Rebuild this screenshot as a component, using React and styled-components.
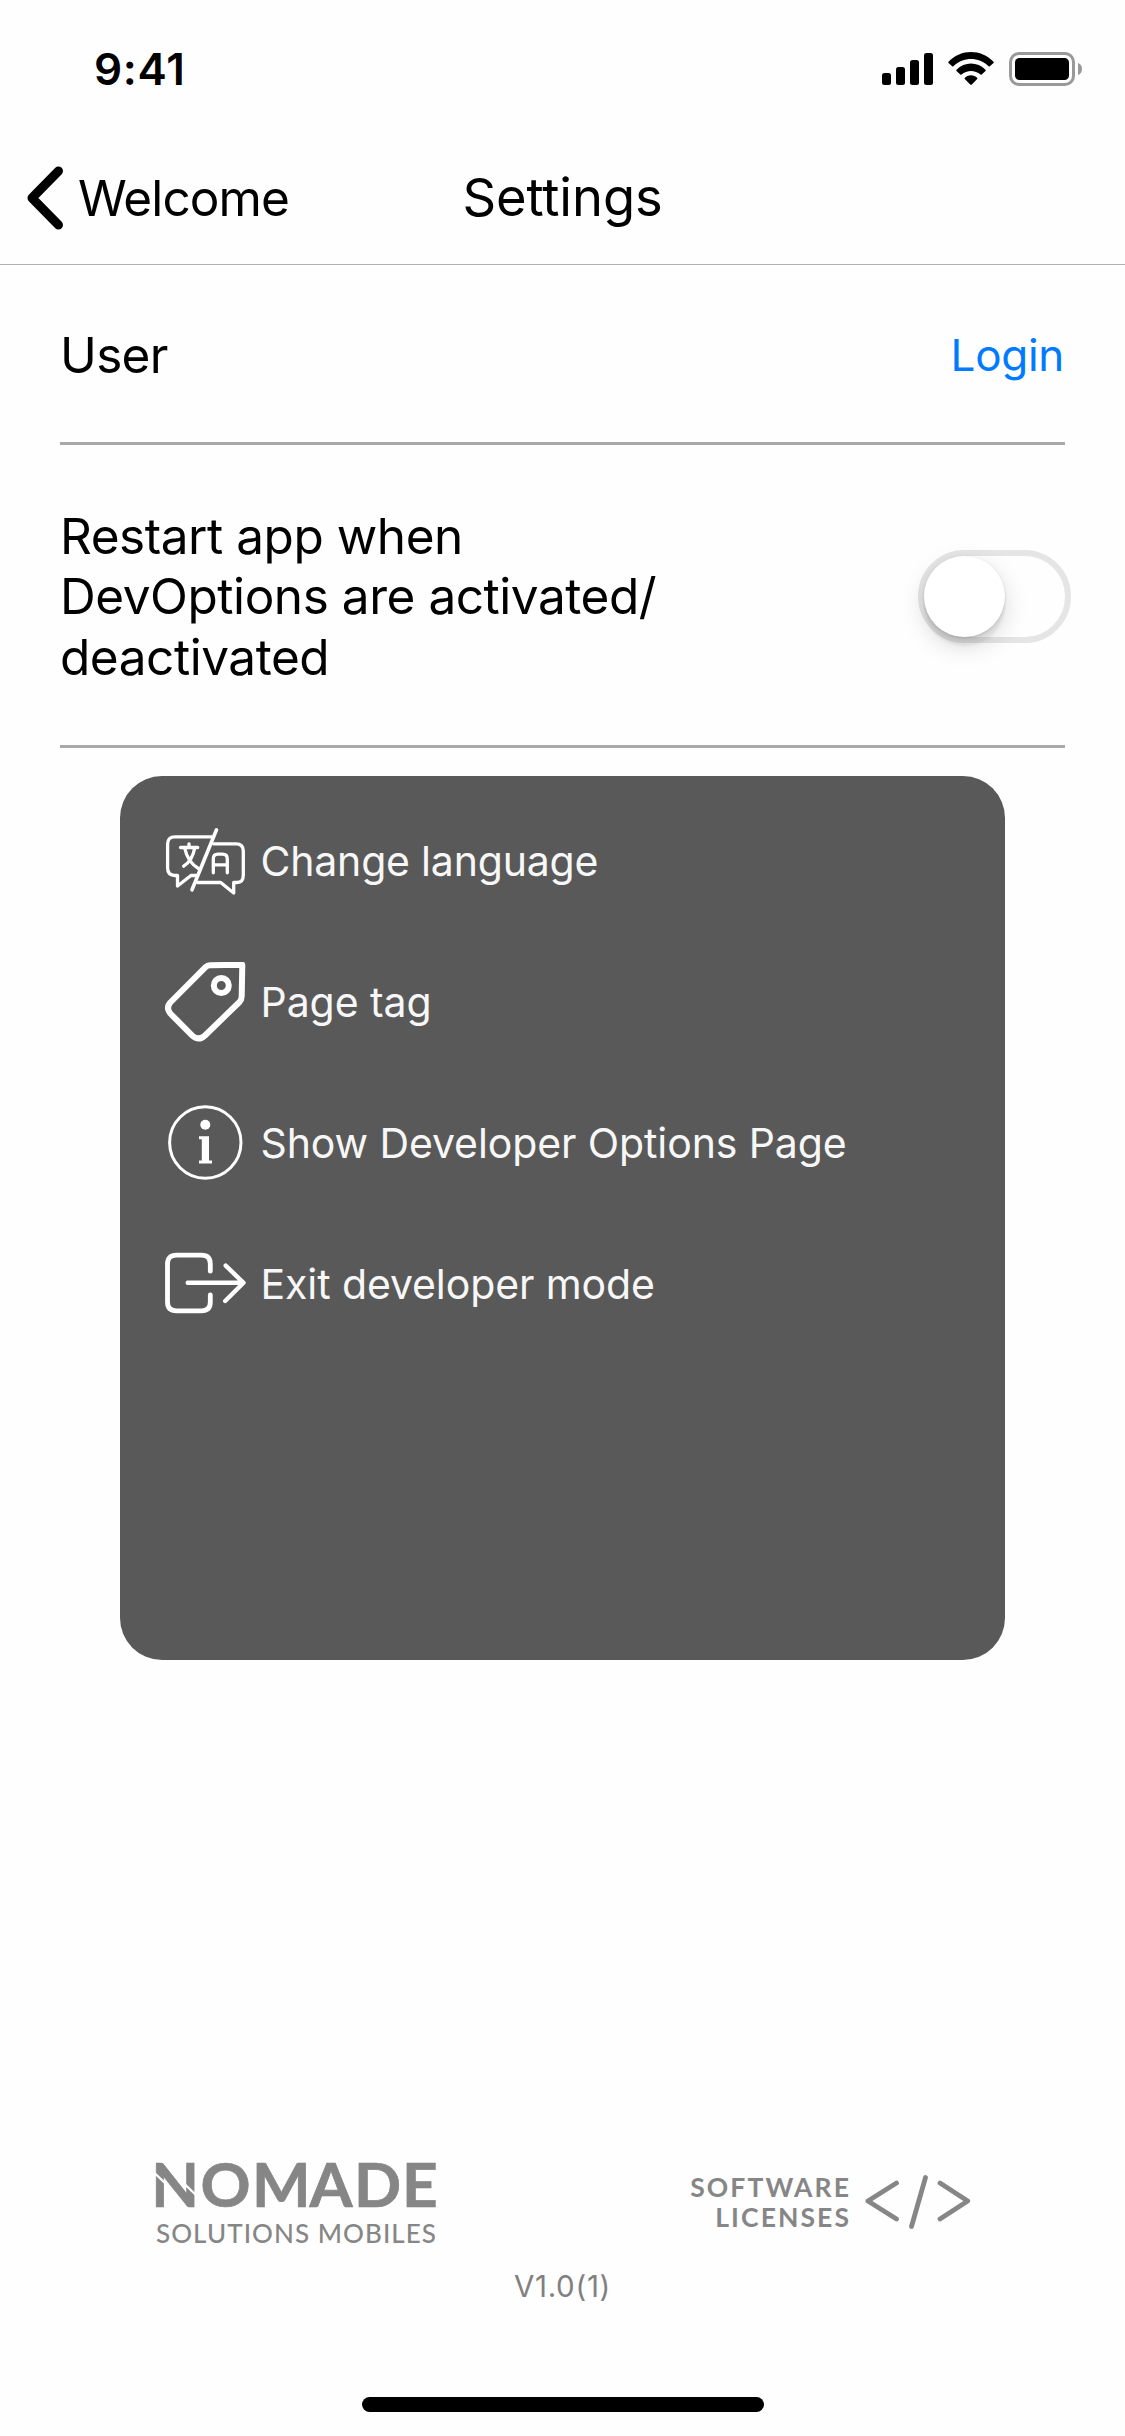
import React from 'react';
import styled, { createGlobalStyle } from 'styled-components';

const GlobalStyle = createGlobalStyle`
  * { box-sizing: border-box; }
  body { margin: 0; background: #fefefe; }
`;

const Screen = styled.div`
  width: 1125px;
  height: 2436px;
  display: flex;
  flex-direction: column;
  background: #fefefe;
  color: #000;
  font-family: Inter, "Liberation Sans", sans-serif;
  white-space: nowrap;
  overflow: hidden;
`;

const StatusBar = styled.header`
  height: 138px;
  padding: 0 43px 0 94px;
  display: flex;
  align-items: center;
  justify-content: space-between;
`;

const Clock = styled.time`
  font-size: 44px;
  font-weight: 600;
  letter-spacing: 0.7px;
`;

const StatusIcons = styled.div`
  display: flex;
  align-items: center;
  gap: 15px;
`;

const NavBar = styled.nav`
  height: 127px;
  padding: 0 27px 6px;
  display: grid;
  grid-template-columns: 1fr auto 1fr;
  align-items: center;
  border-bottom: 1px solid #b2b2b2;
`;

const BackButton = styled.div`
  display: flex;
  align-items: center;
  gap: 14px;
  font-size: 49.5px;
  letter-spacing: -0.9px;
`;

const Title = styled.h1`
  margin: 0;
  padding-bottom: 2px;
  font-size: 52.5px;
  font-weight: 400;
  line-height: 64px;
  letter-spacing: -0.1px;
`;

const SettingRow = styled.section`
  height: ${(p) => p.$height}px;
  margin: 0 60px;
  padding-top: 3px;
  display: flex;
  align-items: center;
  justify-content: space-between;
  border-bottom: 3px solid #a9a9a9;
`;

const SettingLabel = styled.div`
  font-size: 49.5px;
  line-height: 60.5px;
  letter-spacing: ${(p) => p.$spacing}px;
`;

const LoginLink = styled.a`
  margin-right: 1px;
  color: #007aff;
  font-size: 44px;
  letter-spacing: -0.3px;
`;

const Switch = styled.div`
  width: 153px;
  height: 93px;
  margin-right: -6px;
  border: 6px solid #e5e5e5;
  border-radius: 47px;
`;

const Thumb = styled.div`
  width: 81px;
  height: 81px;
  border-radius: 50%;
  background: #fff;
  box-shadow: 0 9px 24px rgba(0, 0, 0, 0.15), 0 9px 3px rgba(0, 0, 0, 0.06), 0 1px 3px rgba(0, 0, 0, 0.15);
`;

const Menu = styled.ul`
  width: 885px;
  height: 884px;
  margin: 28px auto 0;
  padding: 14px 0 0 45px;
  list-style: none;
  background: #595959;
  border-radius: 42px;
`;

const MenuItem = styled.li`
  height: 141px;
  display: flex;
  align-items: center;
  gap: 14.5px;
  color: #f7f7f7;
  font-size: 41px;
  letter-spacing: ${(p) => p.$spacing}px;
`;

const MenuIcon = styled.svg`
  width: 81px;
  height: 81px;
  margin-top: 2px;
  flex: none;
  fill: none;
  stroke: #fff;
  stroke-width: ${(p) => p.$stroke};
  stroke-linecap: round;
  stroke-linejoin: round;
`;

const Footer = styled.footer`
  margin-top: auto;
  display: flex;
  flex-direction: column;
  align-items: center;
  color: #868686;
`;

const Brands = styled.div`
  width: 100%;
  padding: 0 154px 0 147px;
  display: flex;
  align-items: center;
  justify-content: space-between;
`;

const Logo = styled.svg`
  width: 300px;
  height: 124px;
  fill: #868686;
  font-family: Lato, sans-serif;
`;

const Licenses = styled.div`
  display: flex;
  align-items: center;
  gap: 16px;
`;

const LicensesText = styled.div`
  font-family: Lato, sans-serif;
  font-size: 26.5px;
  font-weight: 700;
  line-height: 30px;
  text-align: right;
`;

const LicensesLine = styled.div`
  letter-spacing: ${(p) => p.$spacing}px;
  margin-right: -${(p) => p.$spacing}px;
`;

const Version = styled.div`
  margin-top: 2px;
  font-size: 29.5px;
  line-height: 40px;
  letter-spacing: 0.7px;
  color: #808080;
`;

const HomeIndicator = styled.div`
  width: 402px;
  height: 15px;
  margin: 91px 0 24px 1px;
  border-radius: 8px;
  background: #000;
`;

const SignalIcon = () => (
  <svg width="51" height="34" viewBox="0 0 51 34">
    <rect x="0" y="21" width="9" height="12" rx="2.5" />
    <rect x="14" y="15" width="9" height="18" rx="2.5" />
    <rect x="28" y="8" width="9" height="25" rx="2.5" />
    <rect x="42" y="1" width="9" height="32" rx="2.5" />
  </svg>
);

const WifiIcon = () => (
  <svg width="46" height="34" viewBox="0 0 46 34">
    <path d="M0.5 9.7C13-3.2 33-3.2 45.500 9.700Q46 10.300 45.500 11L41.800 14.300Q41.300 14.800 40.600 14.200C30.500 4.700 15.500 4.700 5.400 14.200Q4.700 14.800 4.200 14.300L0.500 11Q0 10.300 0.500 9.700Z" />
    <path d="M8.500 17.700C16.500 9.500 29.500 9.500 37.500 17.700Q38 18.300 37.500 19L33.700 22.500Q33.100 23 32.500 22.500C27 17.700 19 17.700 13.500 22.500Q12.900 23 12.300 22.500L8.500 19Q8 18.300 8.500 17.700Z" />
    <path d="M16.700 26C20 22.300 26 22.300 29.300 26Q29.700 26.600 29.200 27.100L23.800 32.400Q23 33.200 22.200 32.400L16.800 27.100Q16.300 26.600 16.700 26Z" />
  </svg>
);

const BatteryIcon = () => (
  <svg width="73" height="34" viewBox="0 0 73 34">
    <rect x="1.500" y="1.500" width="63" height="31" rx="8.500" fill="none" stroke="#999" strokeWidth="3" />
    <rect x="6" y="6" width="54" height="22" rx="4.500" />
    <path d="M69 11C71.800 12 73 14.300 73 17S71.800 22 69 23Z" fill="#999" />
  </svg>
);

const BackIcon = () => (
  <svg width="37" height="64" viewBox="0 0 37 64" fill="none" stroke="#000" strokeWidth="9" strokeLinecap="round" strokeLinejoin="round">
    <path d="M31.500 5L5 32L31.500 59" />
  </svg>
);

const LanguageIcon = () => (
  <MenuIcon viewBox="0 0 81 81" $stroke={3.3}>
    <path d="M46.500 15.800H10Q2.600 15.800 2.600 23V47Q2.600 54 9.500 54.500H12.500V65L26 54.500H31" />
    <path d="M51.500 8.800L27 68.800" strokeWidth="3.600" />
    <path d="M48.500 22.800H71Q78.300 22.800 78.300 30V54Q78.300 61.500 72 61.500H68.700V72L55.700 61.500H32.500" />
    <path d="M48.300 51.800V38Q48.300 33.200 53 33.200H57.600Q62.300 33.200 62.300 38V51.800M48.300 43.800H62.300" />
    <path d="M24 22.800V26.500M15.500 26.500H32.700M19.700 27Q22.500 41 33.500 47.500M29.700 27Q27.500 39.500 18.700 45.200" />
  </MenuIcon>
);

const TagIcon = () => (
  <MenuIcon viewBox="0 0 81 81" $stroke={6}>
    <path d="M77.300 2.800L44.800 3.200Q42.500 3.200 40.500 5.200L5.300 40.500Q0.700 46 5.300 51.500L27 73.300Q33.500 79.500 40 73.500L74.500 40Q76.600 37.800 76.700 34.500Z" />
    <circle cx="56.300" cy="23.500" r="7.500" />
  </MenuIcon>
);

const InfoIcon = () => (
  <MenuIcon viewBox="0 0 81 81" $stroke={3}>
    <circle cx="40.300" cy="39.500" r="35.700" />
    <circle cx="40.300" cy="21.800" r="5" fill="#fff" stroke="none" />
    <path d="M34 33.300H44V57.600H47V60.600H34V57.600H36.800V36.300H34Z" fill="#fff" stroke="none" />
  </MenuIcon>
);

const ExitIcon = () => (
  <MenuIcon viewBox="0 0 81 81" $stroke={4.8}>
    <path d="M45.300 27.200V20Q45.300 11.200 36.500 11.200H11.500Q2.500 11.200 2.500 20V58Q2.500 66.800 11.500 66.800H36.500Q45.300 66.800 45.300 58V51" />
    <path d="M22.700 38.800H78M60.700 21.600L78.500 38.800L60.200 57" strokeWidth="4.400" />
  </MenuIcon>
);

const CodeIcon = () => (
  <svg width="106" height="54" viewBox="0 0 106 54" fill="none" stroke="#868686" strokeWidth="4.800" strokeLinecap="round" strokeLinejoin="round">
    <path d="M31.500 8L2.900 26L31.500 44M60.500 2.500L46.500 51.500M75 8L102.700 26L75 44" />
  </svg>
);

const menuItems = [
  { label: 'Change language', Icon: LanguageIcon, spacing: -0.2 },
  { label: 'Page tag', Icon: TagIcon, spacing: -0.05 },
  { label: 'Show Developer Options Page', Icon: InfoIcon, spacing: -0.1 },
  { label: 'Exit developer mode', Icon: ExitIcon, spacing: -0.1 },
];

export default function App() {
  return (
    <Screen>
      <GlobalStyle />
      <StatusBar>
        <Clock>9:41</Clock>
        <StatusIcons>
          <SignalIcon />
          <WifiIcon />
          <BatteryIcon />
        </StatusIcons>
      </StatusBar>
      <NavBar>
        <BackButton>
          <BackIcon />
          Welcome
        </BackButton>
        <Title>Settings</Title>
      </NavBar>
      <SettingRow $height={180}>
        <SettingLabel $spacing={-0.7}>User</SettingLabel>
        <LoginLink>Login</LoginLink>
      </SettingRow>
      <SettingRow $height={303}>
        <SettingLabel $spacing={-0.45}>
          Restart app when<br />DevOptions are activated/<br />deactivated
        </SettingLabel>
        <Switch>
          <Thumb />
        </Switch>
      </SettingRow>
      <Menu>
        {menuItems.map(({ label, Icon, spacing }) => (
          <MenuItem key={label} $spacing={spacing}>
            <Icon />
            {label}
          </MenuItem>
        ))}
      </Menu>
      <Footer>
        <Brands>
          <Logo viewBox="-8 -12 300 124">
            <text x="-3.800 45.500 97 154.500 199 247" y="55" fontSize="62" fontWeight="700" stroke="#868686" strokeWidth="0.700">NOMADE</text>
            <path d="M-1 20.500L11.500 32.500M30 32.500L42 44" stroke="#fefefe" strokeWidth="2.400" />
            <text x="1" y="90.500" fontSize="26" fontWeight="500" textLength="280">SOLUTIONS MOBILES</text>
          </Logo>
          <Licenses>
            <LicensesText>
              <LicensesLine $spacing={2.1}>SOFTWARE</LicensesLine>
              <LicensesLine $spacing={2.1}>LICENSES</LicensesLine>
            </LicensesText>
            <CodeIcon />
          </Licenses>
        </Brands>
        <Version>V1.0(1)</Version>
        <HomeIndicator />
      </Footer>
    </Screen>
  );
}
